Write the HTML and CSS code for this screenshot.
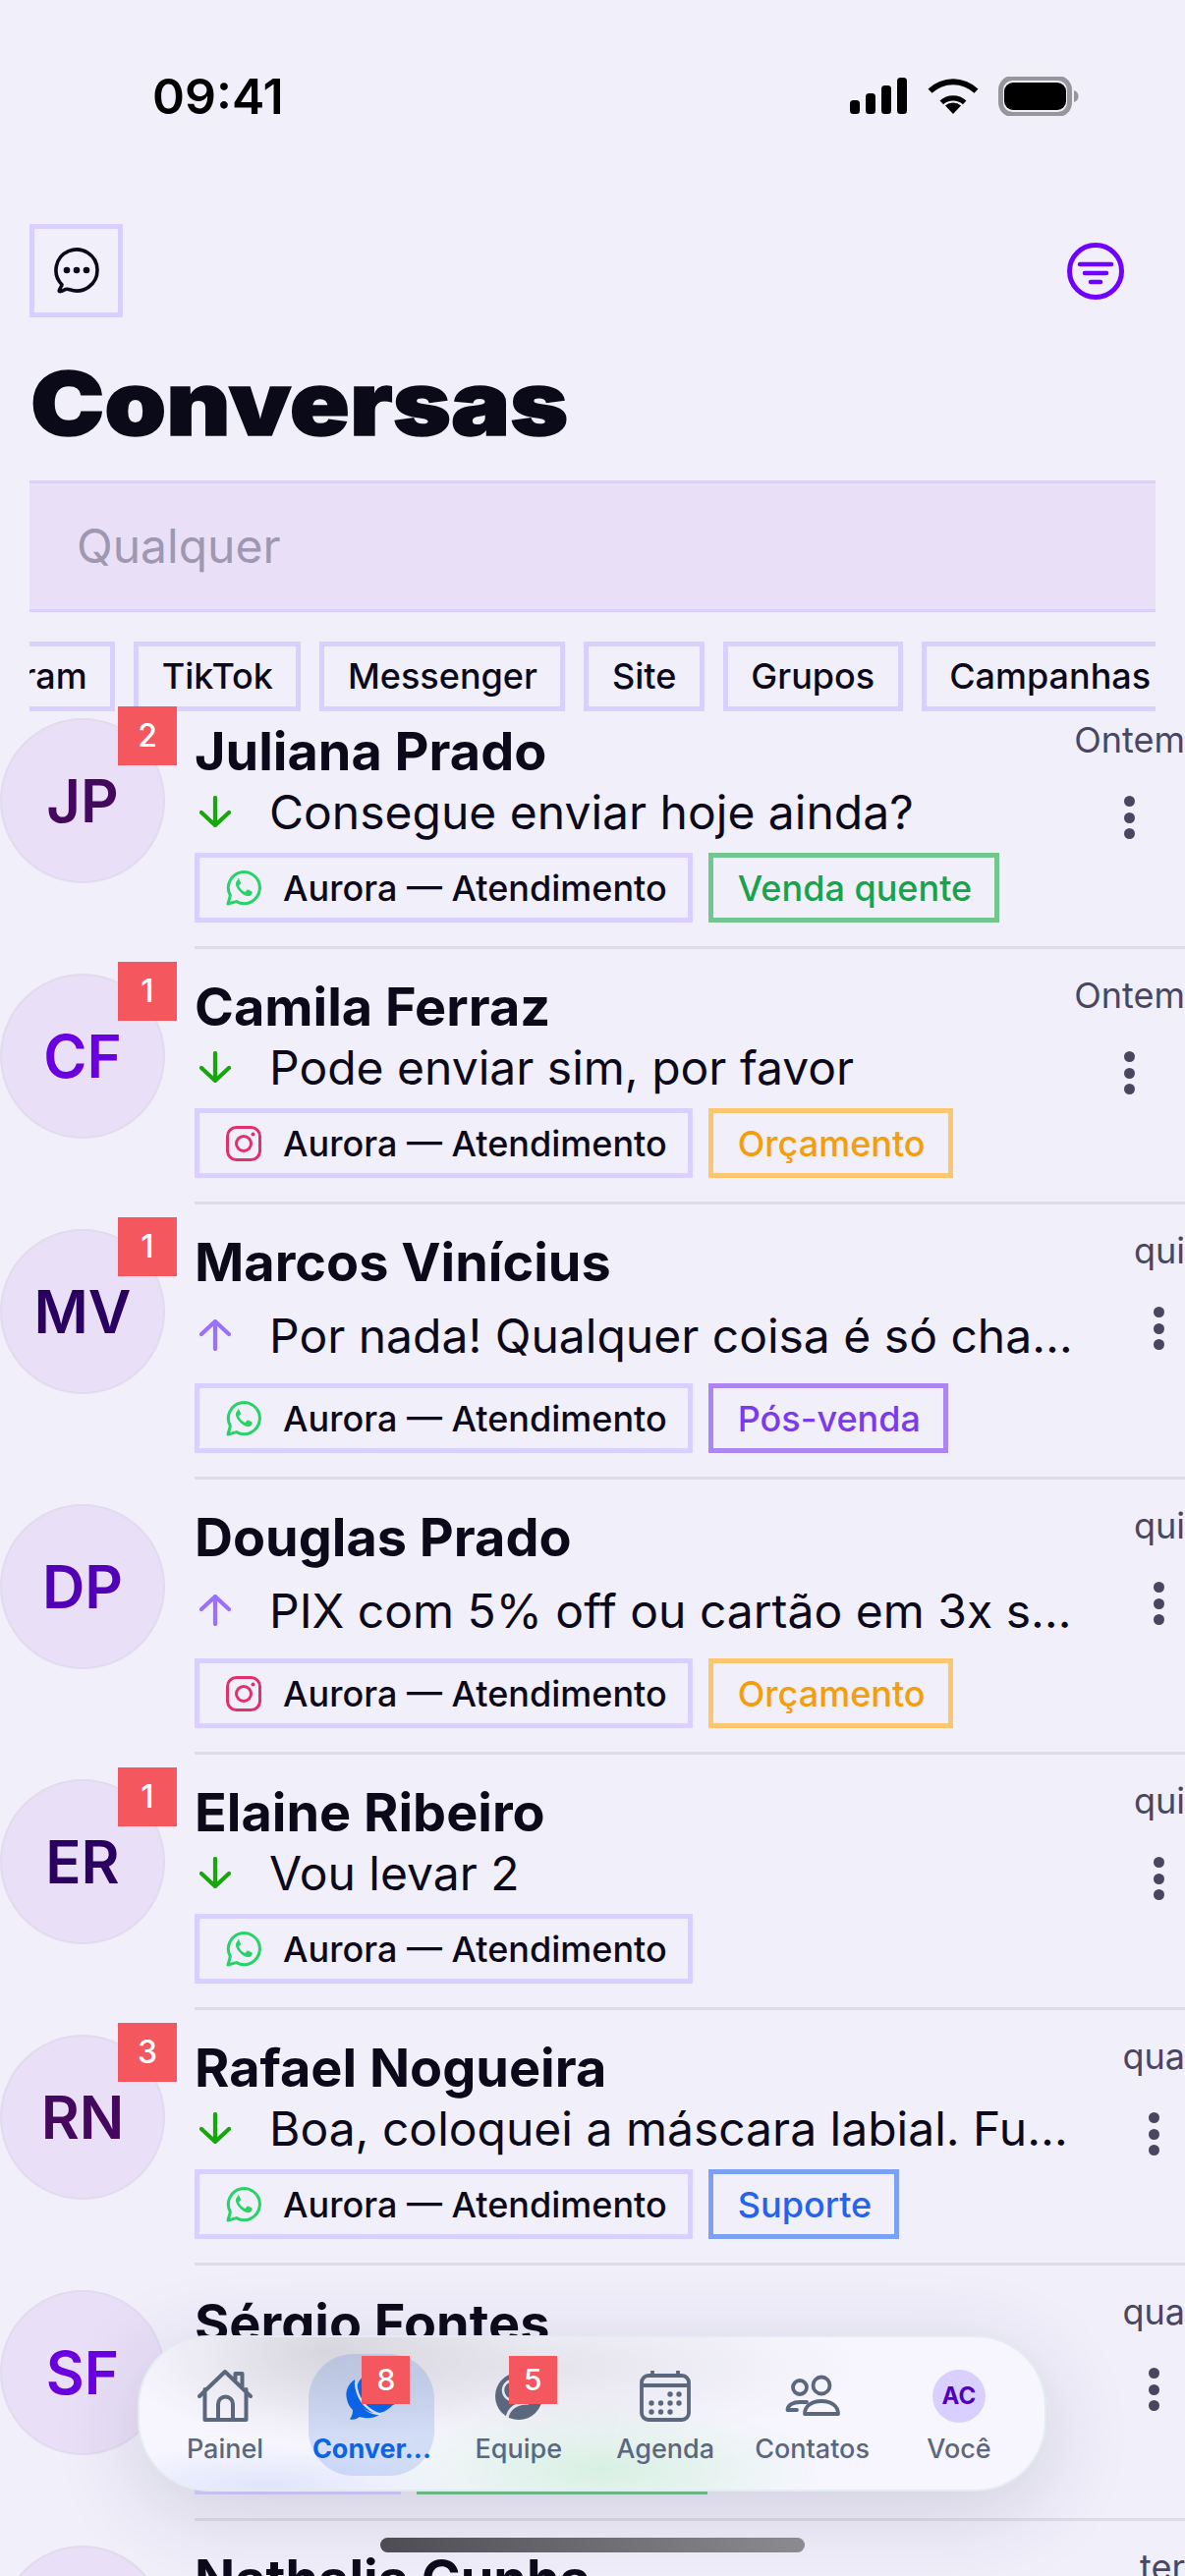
FILE: index.html
```html
<!DOCTYPE html>
<html lang="pt-BR">
<head>
    <meta charset="UTF-8">
    <title>Conversas</title>
    <link rel="stylesheet" href="styles.css">
</head>
<body>
<svg class="sprites" width="0" height="0">
    <symbol id="wa" viewBox="0 0 36 36">
        <path d="M2 34l2.400-8.600A16 16 0 1 1 10.600 31.600z" fill="none" stroke="#25d366" stroke-width="3" stroke-linejoin="round"/>
        <path d="M12.500 9.500c-1.500.5-2.800 2.500-2.500 4.800.6 4.700 6.800 11 11.700 11.700 2.300.3 4.300-1 4.800-2.500.3-1 .2-1.800 0-2l-4-2c-.4-.2-.8-.1-1 .2l-1.500 1.900c-.3.300-.6.400-1 .2-2.500-1-4.700-3.200-5.700-5.700-.2-.4-.1-.7.200-1l1.300-1.500c.3-.3.300-.6.200-1l-1.700-3.900c-.2-.4-1-.9-1.800-.7z" fill="#25d366"/>
    </symbol>
    <symbol id="ig" viewBox="0 0 36 36">
        <rect x="1.500" y="1.500" width="33" height="33" rx="9" fill="none" stroke="#e1306c" stroke-width="3"/>
        <circle cx="18" cy="18" r="7.500" fill="none" stroke="#e1306c" stroke-width="3"/>
        <circle cx="27.500" cy="8.500" r="2" fill="#e1306c"/>
    </symbol>
    <symbol id="down" viewBox="0 0 32 32">
        <path d="M16 2v28M2 17l14 13 14-13" fill="none" stroke="#16a80a" stroke-width="4.200" stroke-linecap="round" stroke-linejoin="round"/>
    </symbol>
    <symbol id="up" viewBox="0 0 32 32">
        <path d="M16 30V2M2 15L16 2l14 13" fill="none" stroke="#9a70ff" stroke-width="4.200" stroke-linecap="round" stroke-linejoin="round"/>
    </symbol>
</svg>

<div class="status">
    <span class="clock">09:41</span>
    <div class="status-icons">
        <svg width="60" height="40" viewBox="0 0 60 40">
            <rect x="1" y="24" width="10" height="14" rx="3.500"/>
            <rect x="17" y="17" width="10" height="21" rx="3.500"/>
            <rect x="33" y="9" width="10" height="29" rx="3.500"/>
            <rect x="49" y="1" width="10" height="37" rx="3.500"/>
        </svg>
        <svg width="52" height="40" viewBox="0 0 52 40">
            <path d="M26 38l-8-8.500a12 12 0 0 1 16 0z"/>
            <path d="M12.500 24.500a20 20 0 0 1 27 0l-3.600 3.800a15 15 0 0 0-19.800 0z"/>
            <path d="M.5 12.500a37 37 0 0 1 51 0l-4 4.300a31 31 0 0 0-43 0z"/>
        </svg>
        <svg width="84" height="40" viewBox="0 0 84 40">
            <rect x="2.500" y="1.500" width="70" height="37" rx="12" fill="none" stroke="#98969c" stroke-width="5"/>
            <rect x="6" y="6" width="63" height="28" rx="9"/>
            <path d="M77 14c3 1 4.500 3 4.500 6s-1.500 5-4.500 6z" fill="#98969c"/>
        </svg>
    </div>
</div>

<div class="header">
    <button class="icon-btn">
        <svg width="48" height="48" viewBox="0 0 48 48">
            <path d="M9 37.700A21 21 0 1 1 17 42.800C14.500 41.700 13 42 11 43.300 9 44.500 6.500 45.200 6.200 44 6 43 8 41 9 37.700z" fill="none" stroke="#0c0a1a" stroke-width="3.600" stroke-linejoin="round"/>
            <circle cx="14" cy="23" r="3.300" fill="#0c0a1a"/>
            <circle cx="24" cy="23" r="3.300" fill="#0c0a1a"/>
            <circle cx="34" cy="23" r="3.300" fill="#0c0a1a"/>
        </svg>
    </button>
    <svg width="58" height="58" viewBox="0 0 58 58">
        <circle cx="29" cy="29" r="26.500" fill="none" stroke="#7000ff" stroke-width="5"/>
        <path d="M13 22h32M18 31h22M24 40h10" fill="none" stroke="#7000ff" stroke-width="4.500" stroke-linecap="round"/>
    </svg>
</div>

<h1 class="title">Conversas</h1>

<div class="search">Qualquer</div>

<div class="chips">
    <div class="chips-track">
        <span class="chip">Instagram</span>
        <span class="chip">TikTok</span>
        <span class="chip">Messenger</span>
        <span class="chip">Site</span>
        <span class="chip">Grupos</span>
        <span class="chip">Campanhas</span>
    </div>
</div>

<div class="list">
    <div class="row">
        <div class="avatar c-plum">JP<span class="badge">2</span></div>
        <div class="body">
            <div class="name">Juliana Prado</div>
            <div class="msg"><svg class="dir"><use href="#down"/></svg><span class="msg-text">Consegue enviar hoje ainda?</span></div>
            <div class="pills">
                <span class="pill"><svg class="pill-icon"><use href="#wa"/></svg>Aurora — Atendimento</span>
                <span class="pill tag tag-green">Venda quente</span>
            </div>
        </div>
        <div class="side"><span class="time">Ontem</span><span class="dots"><i></i><i></i><i></i></span></div>
    </div>

    <div class="row">
        <div class="avatar c-violet">CF<span class="badge">1</span></div>
        <div class="body">
            <div class="name">Camila Ferraz</div>
            <div class="msg"><svg class="dir"><use href="#down"/></svg><span class="msg-text">Pode enviar sim, por favor</span></div>
            <div class="pills">
                <span class="pill"><svg class="pill-icon"><use href="#ig"/></svg>Aurora — Atendimento</span>
                <span class="pill tag tag-orange">Orçamento</span>
            </div>
        </div>
        <div class="side"><span class="time">Ontem</span><span class="dots"><i></i><i></i><i></i></span></div>
    </div>

    <div class="row">
        <div class="avatar c-navy">MV<span class="badge">1</span></div>
        <div class="body">
            <div class="name">Marcos Vinícius</div>
            <div class="msg msg-out"><svg class="dir"><use href="#up"/></svg><span class="msg-text">Por nada! Qualquer coisa é só chamar aqui</span></div>
            <div class="pills">
                <span class="pill"><svg class="pill-icon"><use href="#wa"/></svg>Aurora — Atendimento</span>
                <span class="pill tag tag-purple">Pós-venda</span>
            </div>
        </div>
        <div class="side"><span class="time">qui</span><span class="dots"><i></i><i></i><i></i></span></div>
    </div>

    <div class="row">
        <div class="avatar c-indigo">DP</div>
        <div class="body">
            <div class="name">Douglas Prado</div>
            <div class="msg msg-out"><svg class="dir"><use href="#up"/></svg><span class="msg-text">PIX com 5% off ou cartão em 3x sem juros</span></div>
            <div class="pills">
                <span class="pill"><svg class="pill-icon"><use href="#ig"/></svg>Aurora — Atendimento</span>
                <span class="pill tag tag-orange">Orçamento</span>
            </div>
        </div>
        <div class="side"><span class="time">qui</span><span class="dots"><i></i><i></i><i></i></span></div>
    </div>

    <div class="row">
        <div class="avatar c-navy">ER<span class="badge">1</span></div>
        <div class="body">
            <div class="name">Elaine Ribeiro</div>
            <div class="msg"><svg class="dir"><use href="#down"/></svg><span class="msg-text">Vou levar 2</span></div>
            <div class="pills">
                <span class="pill"><svg class="pill-icon"><use href="#wa"/></svg>Aurora — Atendimento</span>
            </div>
        </div>
        <div class="side"><span class="time">qui</span><span class="dots"><i></i><i></i><i></i></span></div>
    </div>

    <div class="row">
        <div class="avatar c-plum">RN<span class="badge">3</span></div>
        <div class="body">
            <div class="name">Rafael Nogueira</div>
            <div class="msg"><svg class="dir"><use href="#down"/></svg><span class="msg-text">Boa, coloquei a máscara labial. Funcionou muito</span></div>
            <div class="pills">
                <span class="pill"><svg class="pill-icon"><use href="#wa"/></svg>Aurora — Atendimento</span>
                <span class="pill tag tag-blue">Suporte</span>
            </div>
        </div>
        <div class="side"><span class="time">qua</span><span class="dots"><i></i><i></i><i></i></span></div>
    </div>

    <div class="row">
        <div class="avatar c-violet">SF</div>
        <div class="body">
            <div class="name">Sérgio Fontes</div>
            <div class="msg"><svg class="dir"><use href="#down"/></svg><span class="msg-text">Fechado, pode mandar</span></div>
            <div class="pills">
                <span class="pill"><svg class="pill-icon"><use href="#wa"/></svg>Maya</span>
                <span class="pill tag tag-green">Venda quente</span>
            </div>
        </div>
        <div class="side"><span class="time">qua</span><span class="dots"><i></i><i></i><i></i></span></div>
    </div>

    <div class="row">
        <div class="avatar c-plum">NC</div>
        <div class="body">
            <div class="name">Nathalia Cunha</div>
        </div>
        <div class="side"><span class="time">ter</span></div>
    </div>
</div>

<!-- barra de navegacao flutuante -->
<nav class="tabbar">
    <div class="tab">
        <svg class="tab-icon" viewBox="0 0 56 56">
            <path d="M2 28L28 3l26 25M7.500 21v31h42V21M21 52V36a7.500 7.500 0 0 1 15 0v16M38.500 11V5h7v14" fill="none" stroke="#5a677d" stroke-width="4" stroke-linecap="round" stroke-linejoin="round"/>
        </svg>
        <span class="tab-label">Painel</span>
    </div>
    <div class="tab active">
        <svg class="tab-icon" viewBox="0 0 56 56">
            <circle cx="33" cy="24" r="21" fill="#0b63e5"/>
            <path d="M52 36l-6 3-8-3z" fill="#0b63e5"/>
            <path d="M11 11c-7 5-10 12-8 20 1 5 3 8 6 11 0 4-1 7-3 9 3 2 7 0 10-2 4 1 12 3 20-2C23 47 12 37 11 11z" fill="#0b63e5"/>
            <path d="M12 14c1 15 9 28 26 33" fill="none" stroke="#d4dcee" stroke-width="2.500"/>
        </svg>
        <span class="badge badge-tab">8</span>
        <span class="tab-label">Conver...</span>
    </div>
    <div class="tab">
        <svg class="tab-icon" viewBox="0 0 56 56">
            <circle cx="28" cy="28" r="24" fill="#5a677d"/>
            <circle cx="22" cy="22" r="10" fill="#5a677d" stroke="#e6e6ec" stroke-width="2.500"/>
            <path d="M16 50c2-10 10-15 22-15" fill="none" stroke="#e6e6ec" stroke-width="3"/>
        </svg>
        <span class="badge badge-tab">5</span>
        <span class="tab-label">Equipe</span>
    </div>
    <div class="tab">
        <svg class="tab-icon" viewBox="0 0 56 56">
            <rect x="4" y="7" width="48" height="45" rx="7" fill="none" stroke="#5a677d" stroke-width="3.800"/>
            <path d="M4 17h48M15 2v6M41 2v6" fill="none" stroke="#5a677d" stroke-width="3.800"/>
            <g fill="#5a677d">
                <circle cx="33" cy="26" r="2.700"/><circle cx="42" cy="26" r="2.700"/>
                <circle cx="14" cy="35" r="2.700"/><circle cx="23.500" cy="35" r="2.700"/><circle cx="33" cy="35" r="2.700"/><circle cx="42" cy="35" r="2.700"/>
                <circle cx="14" cy="44" r="2.700"/><circle cx="23.500" cy="44" r="2.700"/><circle cx="33" cy="44" r="2.700"/>
            </g>
        </svg>
        <span class="tab-label">Agenda</span>
    </div>
    <div class="tab">
        <svg class="tab-icon" viewBox="0 0 56 56">
            <g fill="none" stroke="#5a677d" stroke-width="3.800" stroke-linecap="round" stroke-linejoin="round">
                <circle cx="37" cy="17" r="8.500"/>
                <circle cx="15" cy="19" r="7"/>
                <path d="M20 46c0-8 7-13 17-13s17 5 17 13z"/>
                <path d="M22 34h-7C8 34 2.500 37 2.500 42H12"/>
            </g>
        </svg>
        <span class="tab-label">Contatos</span>
    </div>
    <div class="tab">
        <span class="me">AC</span>
        <span class="tab-label">Você</span>
    </div>
</nav>

<div class="home-bar"></div>
</body>
</html>
```

FILE: styles.css
```css
* {
    padding: 0;
    margin: 0;
    box-sizing: border-box;
}

html,
body {
    height: 2622px;
    overflow: hidden;
}

body {
    position: relative;
    width: 1206px;
    background: #f1effa;
    font-family: Inter, "Noto Sans", sans-serif;
    color: #0c0a1a;
}

.sprites {
    position: absolute;
}

/* status bar */
.status {
    height: 228px;
    padding: 78px 106px 0 155px;
    display: flex;
    justify-content: space-between;
    align-items: flex-start;
}

.clock {
    font-size: 50px;
    line-height: 40px;
    font-weight: 600;
    color: #000;
}

.status-icons {
    display: flex;
    gap: 20px;
}

/* header */
.header {
    padding: 0 62px 0 30px;
    display: flex;
    justify-content: space-between;
    align-items: center;
}

.icon-btn {
    width: 95px;
    height: 95px;
    border: 5px solid #d9d0ff;
    background: transparent;
    display: flex;
    align-items: center;
    justify-content: center;
}

.title {
    height: 166px;
    margin-left: 31px;
    font-size: 90px;
    line-height: 176px;
    font-weight: 900;
    color: #0b0a18;
    -webkit-text-stroke: 1.5px #0b0a18;
    transform: scaleX(1.12);
    transform-origin: left;
}

.search {
    width: 1146px;
    height: 134px;
    margin-left: 30px;
    padding-left: 48px;
    border: solid #d9d0ff;
    border-width: 3px 0;
    background: #e9e0f7;
    font-size: 48px;
    line-height: 128px;
    color: #9e98b0;
}

.chips {
    width: 1146px;
    margin: 30px 0 0 30px;
    overflow: hidden;
}

.chips-track {
    display: flex;
    gap: 19px;
    margin-left: -142px;
}

.chip {
    flex: none;
    height: 71px;
    padding: 0 23.500px;
    border: 5px solid #d9d0ff;
    font-size: 36px;
    line-height: 61px;
    font-weight: 500;
}

/* conversation list */
.list {
    margin-top: -18px;
}

.row {
    height: 260px;
    padding-top: 25px;
    display: flex;
    position: relative;
}

.row:has(.msg-out) {
    height: 280px;
}

.row::after {
    content: "";
    position: absolute;
    left: 198px;
    right: 0;
    bottom: 0;
    height: 3px;
    background: #dedce6;
}

.avatar {
    flex: none;
    width: 168px;
    height: 168px;
    margin-right: 30px;
    border: 2px solid #e2dbee;
    border-radius: 50%;
    background: #e9e0f7;
    font-size: 60px;
    line-height: 164px;
    font-weight: 600;
    text-align: center;
    position: relative;
}

.c-plum { color: #45085f; }
.c-violet { color: #6a00e0; }
.c-navy { color: #2a0060; }
.c-indigo { color: #5200b8; }

.badge {
    position: absolute;
    left: 118px;
    top: -14px;
    width: 60px;
    height: 60px;
    background: #f4585e;
    color: #fff;
    font-size: 32px;
    line-height: 60px;
    font-weight: 500;
    text-align: center;
}

.body {
    flex: 1;
    min-width: 0;
    padding-right: 52px;
}

.name {
    height: 68px;
    font-size: 54px;
    line-height: 68px;
    font-weight: 700;
    white-space: nowrap;
}

.msg {
    height: 54px;
    margin-bottom: 15px;
    display: flex;
    align-items: center;
    font-size: 48px;
    white-space: nowrap;
}

.msg-out {
    height: 80px;
    margin-bottom: 9px;
}

.dir {
    flex: none;
    width: 32px;
    height: 32px;
    margin: 0 39px 0 5px;
}

.msg-text {
    overflow: hidden;
    text-overflow: ellipsis;
}

.pills {
    display: flex;
    gap: 16px;
}

.pill {
    height: 71px;
    padding: 0 21px 0 27px;
    border: 5px solid #d9d0ff;
    display: flex;
    align-items: center;
    font-size: 36px;
    font-weight: 500;
    white-space: nowrap;
}

.pill-icon {
    width: 36px;
    height: 36px;
    margin-right: 22px;
}

.tag {
    padding: 0 23px 0 25px;
}

.tag-green { border-color: #74c68f; color: #16a34a; }
.tag-orange { border-color: #fbc66e; color: #f59e0b; }
.tag-purple { border-color: #ab86f2; color: #7c3aed; }
.tag-blue { border-color: #7ba1f4; color: #2563eb; }

.side {
    flex: none;
    display: flex;
    flex-direction: column;
    align-items: center;
}

.time {
    font-size: 36px;
    line-height: 44px;
    color: #4b4660;
}

.dots {
    margin-top: 35px;
    display: flex;
    flex-direction: column;
    gap: 5.500px;
}

.dots i {
    width: 11px;
    height: 11px;
    border-radius: 50%;
    background: #4b4660;
}

/* floating tab bar: frosted look, the haze of the row underneath is painted in */
.tabbar {
    position: absolute;
    left: 140px;
    top: 2377px;
    width: 925px;
    height: 159px;
    padding: 17px 23px 18px;
    display: flex;
    justify-content: space-between;
    border: 2px solid rgba(225, 235, 240, .9);
    border-radius: 72px;
    background:
        radial-gradient(ellipse 230px 70px at 470px 135px, rgba(190, 235, 205, .55), transparent),
        radial-gradient(ellipse 190px 40px at 130px 150px, rgba(200, 212, 250, .5), transparent),
        radial-gradient(ellipse 210px 95px at 190px 15px, rgba(190, 188, 195, .5), transparent),
        radial-gradient(ellipse 330px 80px at 400px 30px, rgba(200, 198, 208, .4), transparent),
        #f7f6fe;
    box-shadow: 0 20px 90px rgba(40, 40, 80, .16);
}

.tab {
    width: 128px;
    height: 124px;
    padding-top: 15px;
    border-radius: 46px;
    display: flex;
    flex-direction: column;
    align-items: center;
    position: relative;
}

.tab.active {
    background: rgba(30, 100, 220, .16);
}

.tab-icon {
    width: 56px;
    height: 56px;
}

.tab-label {
    margin-top: 8px;
    font-size: 27px;
    line-height: 36px;
    font-weight: 500;
    color: #5a677d;
    white-space: nowrap;
}

.tab.active .tab-label {
    font-weight: 700;
    color: #0b63e5;
}

.badge-tab {
    left: 54px;
    top: 2px;
    width: 49px;
    height: 49px;
    font-size: 30px;
    line-height: 49px;
}

.me {
    width: 54px;
    height: 54px;
    margin: 1px 0;
    border-radius: 50%;
    background: #d9d0ff;
    color: #5200b8;
    font-size: 24px;
    line-height: 54px;
    font-weight: 700;
    text-align: center;
}

.home-bar {
    position: absolute;
    left: 387px;
    top: 2583px;
    width: 432px;
    height: 15px;
    border-radius: 8px;
    background: linear-gradient(90deg, #4c4c52, #8b8b90);
}
```
